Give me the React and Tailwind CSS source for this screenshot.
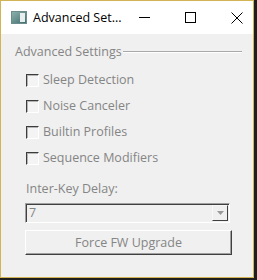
const font = { fontFamily: '"Open Sans", "Noto Sans", sans-serif' }

function Check({ label }) {
  return (
    <div className="flex h-[26px] items-center pl-[11px]">
      <span className="box-border h-[13px] w-[13px] border border-t-[#3c3c3c] border-l-[#3c3c3c] border-r-white border-b-white bg-[#f4f4f4] shadow-[inset_1px_1px_0_#b4b4b4]" />
      <span className="ml-[4px] text-[12.5px] leading-[16px] text-[#858585]">{label}</span>
    </div>
  )
}

export default function App() {
  return (
    <div className="h-[280px] w-[257px] bg-[#1e1e1e]" style={font}>
      <div className="box-border flex h-[278px] w-[254px] flex-col border border-[#d2b455] bg-[#f0f0f0]">
        <div className="flex h-[33px] items-center bg-white">
          <svg width="16" height="13" viewBox="0 0 16 13" className="ml-[10px] shrink-0">
            <defs>
              <linearGradient id="g" x1="0" y1="0" x2="1" y2="1">
                <stop offset="0" stopColor="#8fb3b0" />
                <stop offset="1" stopColor="#3d6b6a" />
              </linearGradient>
            </defs>
            <rect x="0.5" y="0.5" width="15" height="12" fill="url(#g)" stroke="#6d8c8c" />
            <rect x="9" y="2" width="5" height="9" fill="#e8eeee" />
          </svg>
          <span className="ml-[6px] whitespace-nowrap text-[12.5px] leading-[16px] text-black">Advanced Set...</span>
          <div className="flex-1" />
          <div className="flex h-full w-[46px] shrink-0 items-center justify-center">
            <div className="h-px w-[11px] bg-black" />
          </div>
          <div className="flex h-full w-[46px] shrink-0 items-center justify-center">
            <div className="h-[11px] w-[11px] border border-black" />
          </div>
          <div className="flex h-full w-[46px] shrink-0 items-center justify-center">
            <svg width="12" height="12" viewBox="0 0 12 12">
              <path d="M0.5 0.5 L11.5 11.5 M11.5 0.5 L0.5 11.5" stroke="black" strokeWidth="1" />
            </svg>
          </div>
        </div>

        <div className="flex flex-col pl-[14px] pr-[11px]">
          <div className="mt-[10px] flex h-[16px] items-center">
            <span className="text-[12.5px] leading-[16px] text-[#858585]">Advanced Settings</span>
            <div className="ml-px flex-1 border-t border-t-[#a8a8a8] border-b border-b-white" />
          </div>

          <div className="mt-[7px] flex flex-col">
            <Check label="Sleep Detection" />
            <Check label="Noise Canceler" />
            <Check label="Builtin Profiles" />
            <Check label="Sequence Modifiers" />
          </div>

          <div className="mt-[10px] pl-[11px] text-[12.5px] leading-[16px] text-[#858585]">Inter-Key Delay:</div>

          <div className="ml-[10px] mt-[6px] box-border flex h-[20px] w-[205px] items-center border border-t-[#a0a0a0] border-l-[#a0a0a0] border-r-white border-b-white bg-[#f0f0f0] shadow-[inset_1px_1px_0_#404040]">
            <span className="ml-[3px] flex-1 text-[12.5px] leading-[16px] text-[#858585]">7</span>
            <div className="mr-px box-border flex h-[16px] w-[16px] items-center justify-center border border-t-[#f8f8f8] border-l-[#f8f8f8] border-r-[#404040] border-b-[#404040] bg-[#f0f0f0]">
              <svg width="7" height="4" viewBox="0 0 7 4">
                <path d="M0 0 H7 L3.5 4 Z" fill="#9a9a9a" />
              </svg>
            </div>
          </div>

          <div className="ml-[10px] mt-[7px] box-border flex h-[25px] w-[207px] items-center justify-center border border-t-white border-l-white border-r-[#404040] border-b-[#404040] bg-[#f0f0f0] shadow-[inset_-1px_-1px_0_#a0a0a0]">
            <span className="text-[12.5px] leading-[16px] text-[#858585]">Force FW Upgrade</span>
          </div>
        </div>
      </div>
    </div>
  )
}
